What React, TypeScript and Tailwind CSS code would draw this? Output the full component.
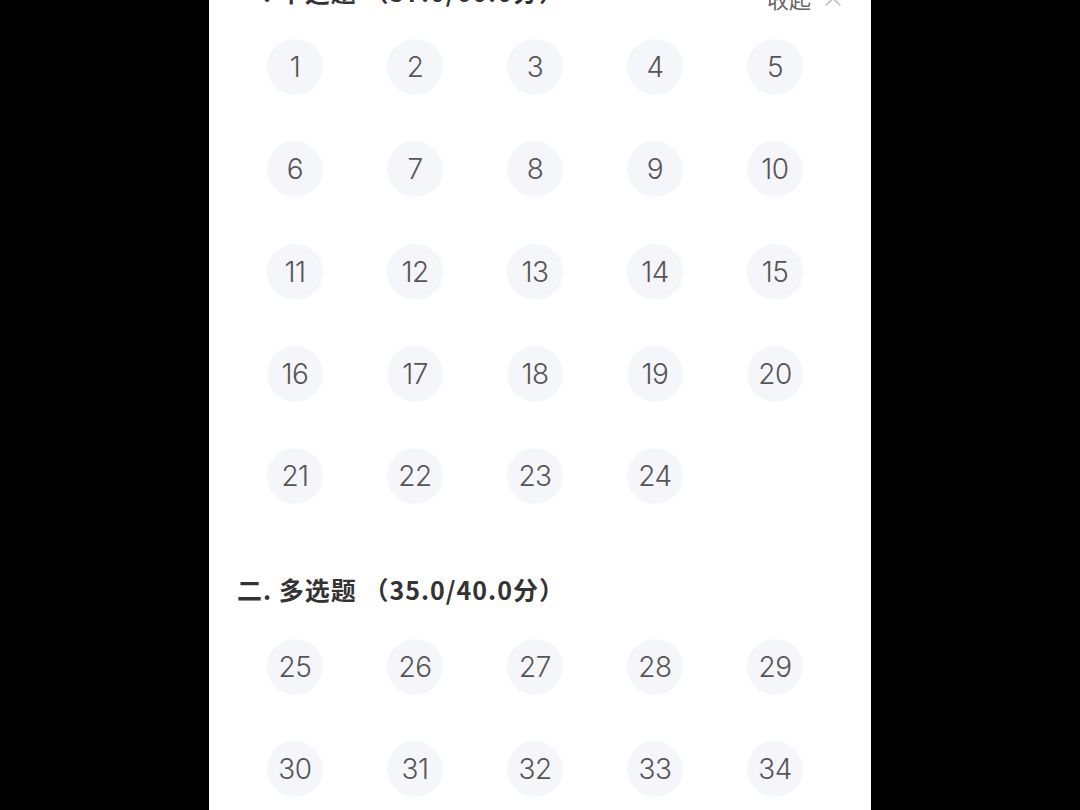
import React from "react";

const cjk = { fontFamily: '"Noto Sans CJK SC", "Noto Sans", sans-serif' };

const QuestionGrid = ({ from, to }: { from: number; to: number }) => {
  const nums: number[] = [];
  for (let i = from; i <= to; i++) nums.push(i);
  return (
    <div className="grid grid-cols-[repeat(5,120px)] gap-y-[46.25px]">
      {nums.map((n) => (
        <div key={n} className="flex justify-center">
          <div
            className="w-14 h-14 rounded-full bg-[#f5f6f9] flex items-center justify-center text-[28px] font-light text-[#555] tracking-[-0.5px]"
            style={{ fontFamily: 'Inter, "Noto Sans", sans-serif' }}
          >
            {n}
          </div>
        </div>
      ))}
    </div>
  );
};

export default function App() {
  return (
    <div className="w-[1080px] h-[810px] bg-black flex justify-center overflow-hidden">
      <div className="w-[662px] h-full bg-white overflow-hidden pl-[26px] pr-[26px]">
        {/* section 1 header, scrolled mostly out of view */}
        <div className="-mt-[30px] h-[36px] flex items-end justify-between pl-[2px]" style={cjk}>
          <div className="text-[25px] leading-none font-bold text-[#333] tracking-[1px] mb-[2px]">
            一. 单选题 （57.0/60.0分）
          </div>
          <div className="flex items-end gap-[10px] text-[22px] leading-none text-[#666] mb-[-3px]">
            <span>收起</span>
            <span className="text-[24px] text-[#c4c4c4]">×</span>
          </div>
        </div>

        <div className="mt-[33px]">
          <QuestionGrid from={1} to={24} />
        </div>

        <div
          className="mt-[69px] h-[34px] flex items-center pl-[2px] text-[25px] font-bold text-[#333] tracking-[1px]"
          style={cjk}
        >
          二. 多选题 （35.0/40.0分）
        </div>

        <div className="mt-[32px]">
          <QuestionGrid from={25} to={34} />
        </div>
      </div>
    </div>
  );
}
